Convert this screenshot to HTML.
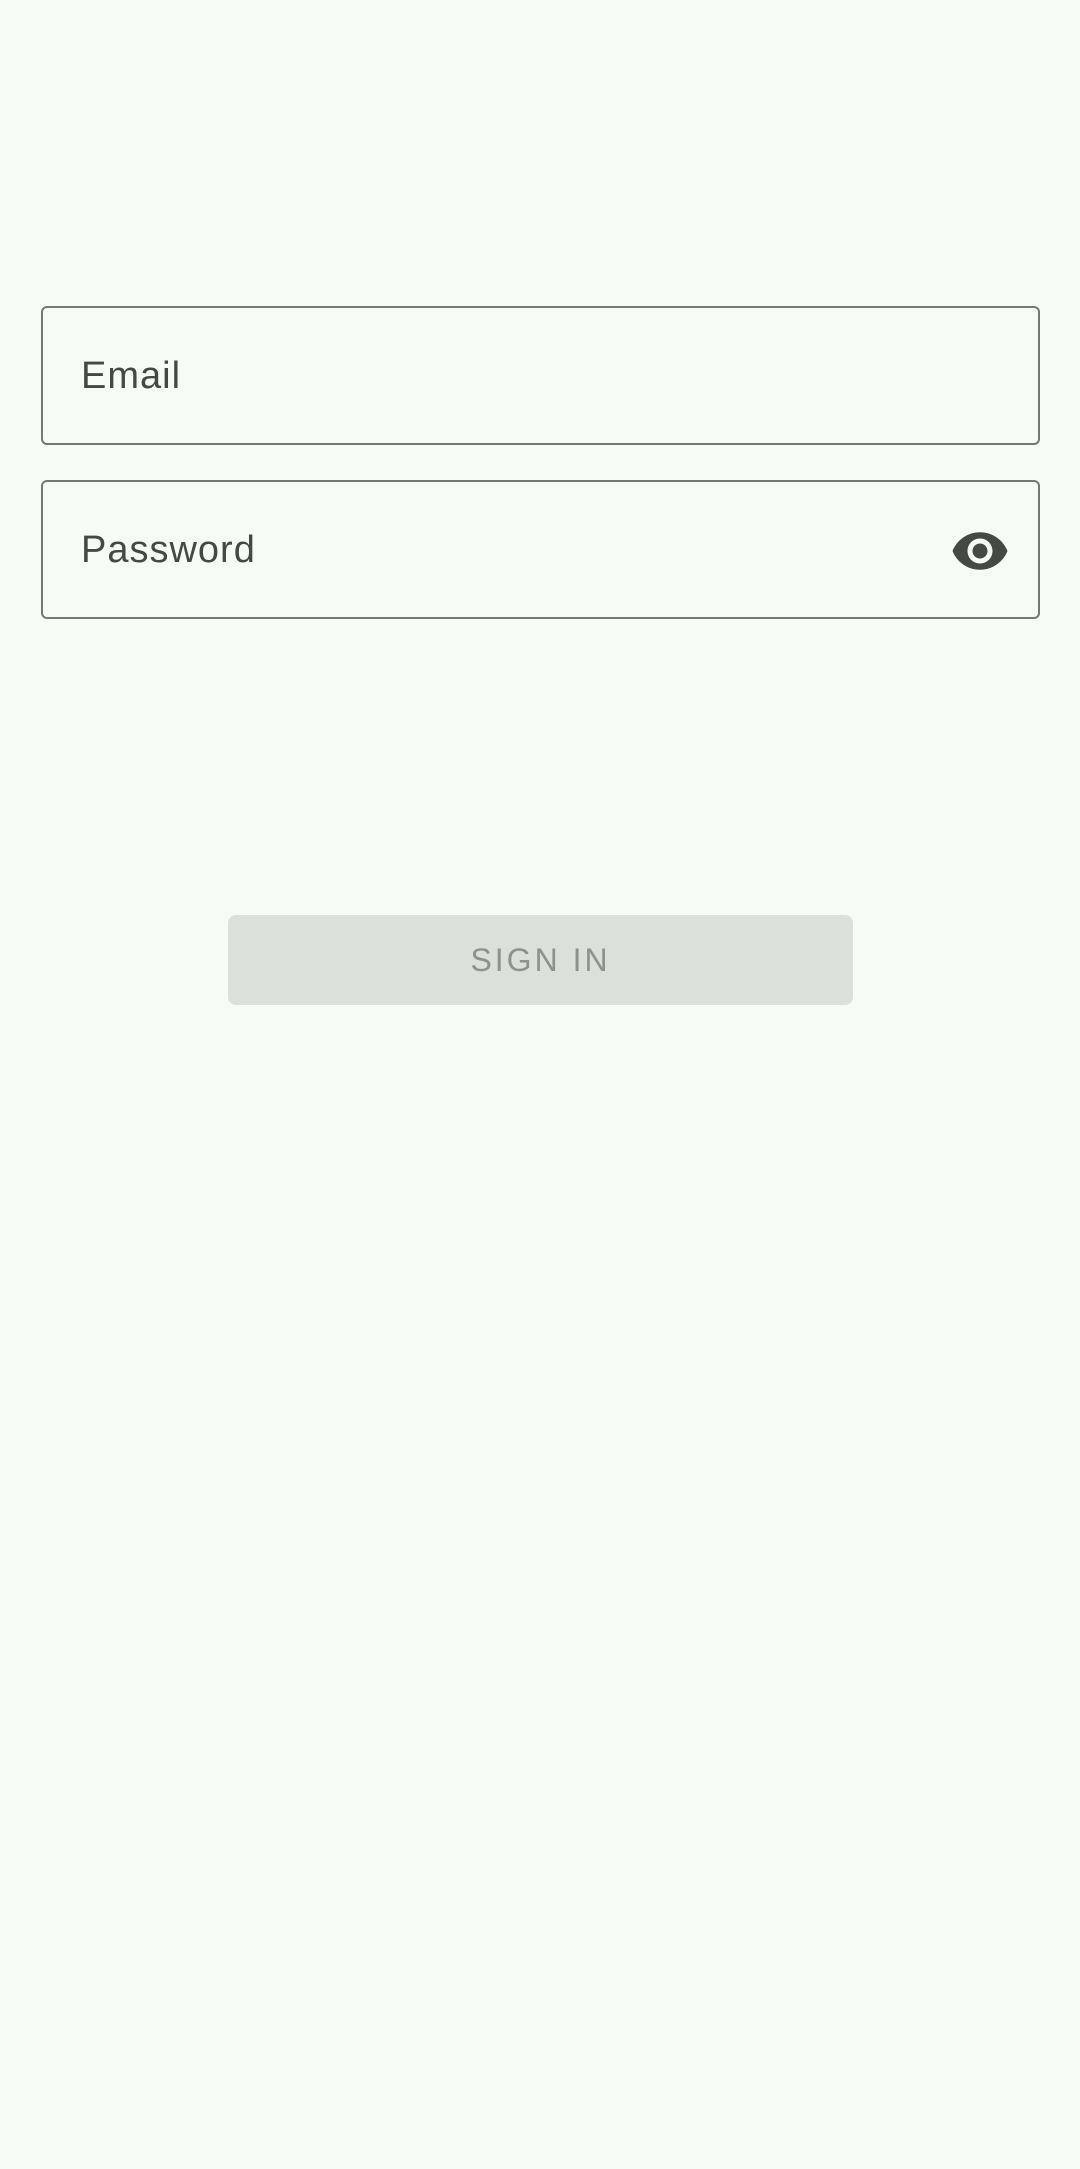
<!DOCTYPE html>
<html><head><meta charset="utf-8">
<style>
html,body{margin:0;padding:0;}
body{width:1080px;height:2169px;background:#f5fcf4;position:relative;overflow:hidden;font-family:"Liberation Sans",sans-serif;}
.field{position:absolute;left:41px;width:999px;height:139px;border:2.5px solid #747a72;border-radius:6px;box-sizing:border-box;}
.label{position:absolute;left:38px;top:3px;line-height:130px;font-size:38px;letter-spacing:1px;color:#434a42;}
.btn{position:absolute;left:228px;top:915px;width:625px;height:90px;background:#dbe1da;border-radius:8px;text-align:center;line-height:90px;font-size:32px;letter-spacing:3px;color:#8d928b;}
svg{position:absolute;}
</style></head><body>
<div class="field" style="top:306px"><div class="label">Email</div></div>
<div class="field" style="top:480px"><div class="label">Password</div>
<svg style="left:907px;top:39px" width="60" height="60" viewBox="0 0 24 24"><path fill="#434a42" d="M12 4.5C7 4.5 2.73 7.61 1 12c1.730 4.39 6 7.5 11 7.5s9.27-3.11 11-7.5c-1.73-4.39-6-7.5-11-7.5zM12 17c-2.76 0-5-2.240-5-5s2.24-5 5-5 5 2.24 5 5-2.24 5-5 5zm0-8c-1.66 0-3 1.34-3 3s1.34 3 3 3 3-1.34 3-3-1.34-3-3-3z"/></svg>
</div>
<div class="btn">SIGN IN</div>
</body></html>
